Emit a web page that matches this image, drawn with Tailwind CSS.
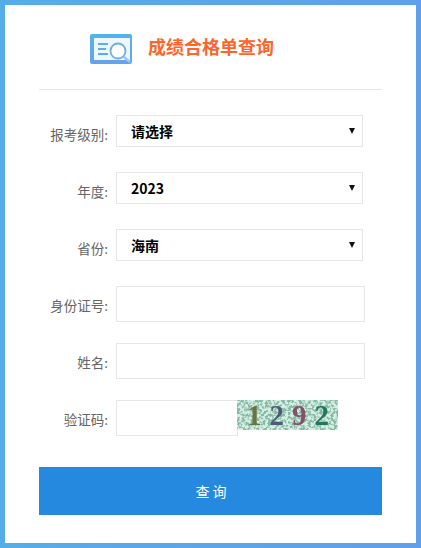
<!DOCTYPE html>
<html lang="zh-CN">
<head>
    <meta charset="UTF-8">
    <title>成绩合格单查询</title>
    <script src="https://cdn.jsdelivr.net/npm/@tailwindcss/browser@4"></script>
</head>
<body class="bg-white font-['Noto_Sans_CJK_SC','Liberation_Sans',sans-serif]">
    <div class="h-[548px] w-[421px] bg-gradient-to-r from-[#55ade8] to-[#5f9feb] p-[5px]">
        <div class="h-[538px] bg-white px-[34px]">
            <!-- header -->
            <div class="flex h-[85px] w-[343px] items-start border-b border-[#e6e6e6] pt-[29px] pl-[51px]">
                <svg width="42" height="30" viewBox="0 0 42 30">
                    <defs>
                        <linearGradient id="logo" x1="0" y1="0" x2="0" y2="1">
                            <stop offset="0" stop-color="#52b4ea"/>
                            <stop offset="1" stop-color="#67a2ec"/>
                        </linearGradient>
                    </defs>
                    <rect x="0" y="0" width="42" height="30" rx="2" fill="url(#logo)"/>
                    <rect x="4" y="4" width="36" height="22" fill="#eef7fd"/>
                    <path d="M8 10h10M8 15h8M8 20h10" stroke="#5aaeea" stroke-width="2" fill="none"/>
                    <circle cx="28" cy="17" r="7.5" stroke="#6aaeea" stroke-width="1.8" fill="#fff"/>
                    <path d="M33.5 22.5l6.5 5.5" stroke="#9cc8f0" stroke-width="2.6" fill="none"/>
                </svg>
                <h1 class="ml-[16px] mt-[-3px] text-[18px] leading-[30px] font-bold text-[#ff6428]">成绩合格单查询</h1>
            </div>

            <form class="flex flex-col">
                <div class="mt-[25px] flex items-start">
                    <label class="w-[69px] pt-[9px] text-right text-[13.5px] leading-[20px] text-[#666]">报考级别:</label>
                    <div class="relative ml-[8px]">
                        <select class="h-[32px] w-[247px] appearance-none border border-[#e6e6e6] bg-white pl-[14px] text-[14px] font-bold text-black">
                            <option>请选择</option>
                        </select>
                        <svg width="6" height="6" viewBox="0 0 7 7" class="absolute right-[8px] top-[13px]"><path d="M0 0h7L3.5 7z" fill="#111"/></svg>
                    </div>
                </div>
                <div class="mt-[25px] flex items-start">
                    <label class="w-[69px] pt-[9px] text-right text-[13.5px] leading-[20px] text-[#666]">年度:</label>
                    <div class="relative ml-[8px]">
                        <select class="h-[32px] w-[247px] appearance-none border border-[#e6e6e6] bg-white pl-[14px] text-[14px] font-bold text-black">
                            <option>2023</option>
                        </select>
                        <svg width="6" height="6" viewBox="0 0 7 7" class="absolute right-[8px] top-[13px]"><path d="M0 0h7L3.5 7z" fill="#111"/></svg>
                    </div>
                </div>
                <div class="mt-[25px] flex items-start">
                    <label class="w-[69px] pt-[9px] text-right text-[13.5px] leading-[20px] text-[#666]">省份:</label>
                    <div class="relative ml-[8px]">
                        <select class="h-[32px] w-[247px] appearance-none border border-[#e6e6e6] bg-white pl-[14px] text-[14px] font-bold text-black">
                            <option>海南</option>
                        </select>
                        <svg width="6" height="6" viewBox="0 0 7 7" class="absolute right-[8px] top-[13px]"><path d="M0 0h7L3.5 7z" fill="#111"/></svg>
                    </div>
                </div>
                <div class="mt-[25px] flex items-start">
                    <label class="w-[69px] pt-[9px] text-right text-[13.5px] leading-[20px] text-[#666]">身份证号:</label>
                    <input type="text" class="ml-[8px] h-[36px] w-[249px] border border-[#e6e6e6]">
                </div>
                <div class="mt-[21px] flex items-start">
                    <label class="w-[69px] pt-[9px] text-right text-[13.5px] leading-[20px] text-[#666]">姓名:</label>
                    <input type="text" class="ml-[8px] h-[36px] w-[249px] border border-[#e6e6e6]">
                </div>
                <div class="mt-[21px] flex items-start">
                    <label class="w-[69px] pt-[9px] text-right text-[13.5px] leading-[20px] text-[#666]">验证码:</label>
                    <input type="text" class="ml-[8px] h-[36px] w-[122px] border border-[#e6e6e6]">
                    <!-- captcha -->
                    <div class="relative ml-[-1px] flex h-[30px] w-[101px] justify-center gap-[8px] overflow-hidden bg-[#d6efe4] pl-[1px] font-['Liberation_Serif',serif] text-[29px] leading-[30px] font-bold">
                        <svg width="101" height="30" class="absolute top-0 left-0">
                            <filter id="noise" x="0" y="0" width="100%" height="100%" color-interpolation-filters="sRGB">
                                <feTurbulence type="fractalNoise" baseFrequency="0.35" numOctaves="2" seed="7"/>
                                <feColorMatrix values="0 0 0 0 0.52  0 0 0 0 0.72  0 0 0 0 0.64  5 0 0 0 -2.1"/>
                            </filter>
                            <rect width="101" height="30" fill="#000" filter="url(#noise)"/>
                        </svg>
                        <span class="relative text-[#6a7344] blur-[0.5px]">1</span>
                        <span class="relative text-[#4a5d72] blur-[0.5px]">2</span>
                        <span class="relative text-[#85506a] blur-[0.5px]">9</span>
                        <span class="relative text-[#23755f] blur-[0.5px]">2</span>
                    </div>
                </div>
                <button type="button" class="mt-[31px] h-[48px] w-[343px] bg-[#2689e0] pl-[4px] text-[14px] tracking-[3px] text-white">查询</button>
            </form>
        </div>
    </div>
</body>
</html>
